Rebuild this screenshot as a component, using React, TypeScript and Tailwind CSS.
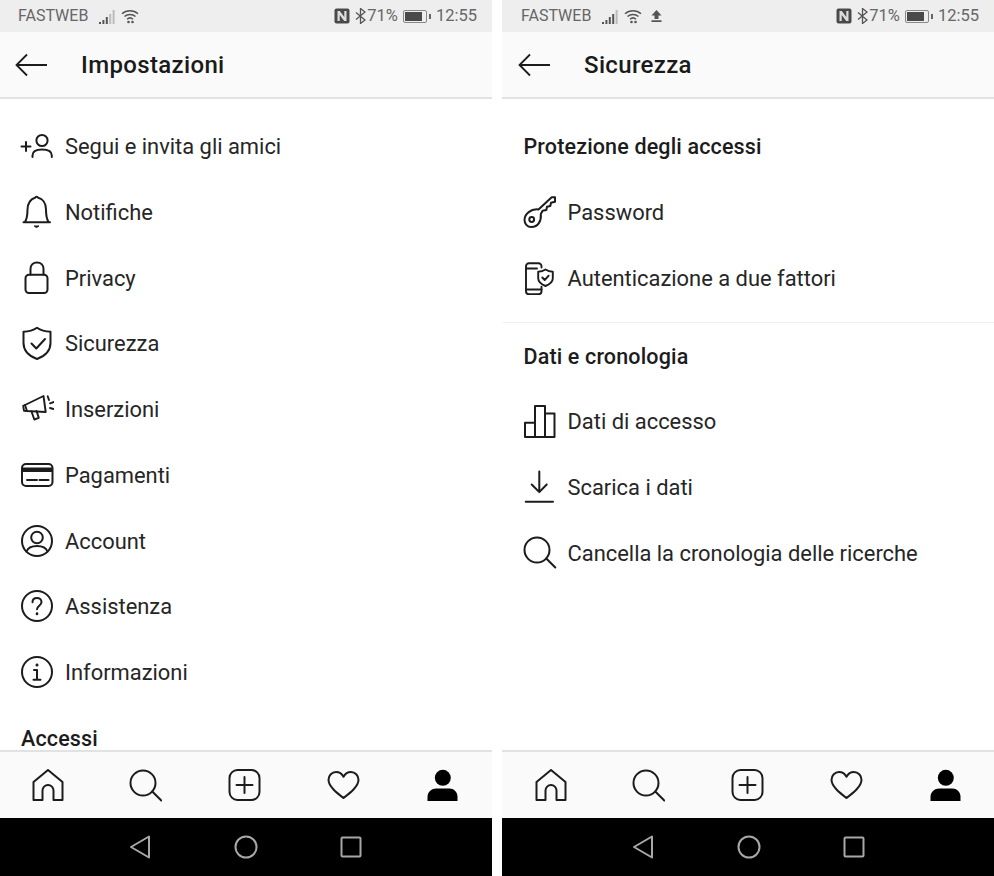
import React from "react";

const font = { fontFamily: "Roboto, sans-serif" };

type P = { children: React.ReactNode; w?: number; h?: number; sw?: number; cls?: string };
function Ic({ children, w = 34, h = 34, sw = 2, cls = "text-[#1c1c1c]" }: P) {
  return (
    <svg
      width={w}
      height={h}
      viewBox={`0 0 ${w} ${h}`}
      fill="none"
      stroke="currentColor"
      strokeWidth={sw}
      strokeLinecap="round"
      strokeLinejoin="round"
      className={`shrink-0 ${cls}`}
    >
      {children}
    </svg>
  );
}

const IconFollow = () => (
  <Ic>
    <path d="M1.500 17.500h9M6 13v9" />
    <circle cx="22" cy="11.500" r="5.600" />
    <path d="M12.500 28v-1.500C12.500 22.500 16 20.500 22 20.500s9.800 2 9.800 6V28" />
  </Ic>
);
const IconBell = () => (
  <Ic>
    <path d="M3.500 27.300H30M5 27c1.500-2.500 2.500-5.500 2.500-12.500C7.500 8 11 3.800 15 2.800c.6-1.300 2.600-1.300 3.200 0C22.500 3.800 26 8 26 14.500c0 7 1 10 2.500 12.500" />
    <path d="M14.500 31h4.500l-2.250 1.400z" fill="currentColor" strokeWidth="1" />
  </Ic>
);
const IconLock = () => (
  <Ic>
    <rect x="5.500" y="13.700" width="22" height="18.300" rx="3.500" />
    <path d="M10.500 13.500V8c0-3.800 2.800-6.500 6.500-6.500s6.500 2.700 6.500 6.500v5.500" />
  </Ic>
);
const IconShield = () => (
  <Ic>
    <path d="M17 1.800C20.500 4.300 25.500 5.700 30.500 5.800V17C30.500 25 25 30 17 33 9 30 3.500 25 3.500 17V5.800C8.500 5.700 13.500 4.300 17 1.800Z" />
    <path d="M11.500 17.500l4.800 5 8.700-9.500" />
  </Ic>
);
const IconMega = () => (
  <Ic sw={1.900}>
    <path d="M5 13l18.500-9 2.200 16L7 19z" />
    <path d="M5 13l-1.800.800.800 5 3 .200" />
    <path d="M11.500 19.500l2.800 8 4.500-1.600-2.300-7" />
    <path d="M27.700 4.300L29 8M30 11.300l4-1.300M30 16l3.500 1" />
  </Ic>
);
const IconCard = () => (
  <Ic>
    <rect x="2" y="6" width="30.500" height="22" rx="4" />
    <path d="M2.200 9.500h30V14h-30z" fill="currentColor" stroke="none" />
    <path d="M7 22h10M19.500 22h9" />
  </Ic>
);
const IconAccount = () => (
  <Ic>
    <circle cx="17" cy="17" r="15" />
    <circle cx="17" cy="13.500" r="5.800" />
    <path d="M6.500 27.500C8 23.500 12 22 17 22s9 1.500 10.500 5.500" />
  </Ic>
);
const IconHelp = () => (
  <Ic>
    <circle cx="17" cy="17" r="15" />
    <path d="M12.500 13.300c0-2.800 2-4.300 4.500-4.300s4.500 1.600 4.500 4c0 3.600-4.500 3.700-4.500 7.300" />
    <path d="M17 24.500v.4" strokeWidth="2.600" />
  </Ic>
);
const IconInfo = () => (
  <Ic>
    <circle cx="17" cy="17" r="15" />
    <path d="M17 9.800v.4" strokeWidth="2.800" />
    <path d="M14 15h3v9.500M13.500 24.700h7" />
  </Ic>
);
const IconKey = () => (
  <Ic>
    <path d="M15.500 14.500L28.700 2.300H32V6.700L28 7.700 27.300 11 24 11.700 23.300 15 19.600 15.700 17.800 19C18.500 26 15 32 8.500 32 4 32 1.500 28.500 1.500 25 1.500 19 8 13.500 15.500 14.500Z" />
    <circle cx="8.700" cy="24.500" r="2.400" />
  </Ic>
);
const IconPhone = () => (
  <Ic sw={1.900}>
    <path d="M18.500 6.500V5.300c0-1.800-1.300-3-3-3H6c-1.700 0-3 1.200-3 3v25c0 1.700 1.300 2.900 3 2.900h9.500c1.700 0 3-1.200 3-2.900v-4.500" />
    <path d="M3 7.500h11" />
    <path d="M3 28.500h15.500" />
    <path d="M22.500 8.500c2 1.300 4.500 2.100 7.300 2.200v6.500c0 3.700-3 6-7.300 7.800-4.300-1.800-7.300-4.100-7.300-7.800v-6.500c2.800-.1 5.300-.9 7.300-2.200z" />
    <path d="M19.300 16.500l2.400 2.500 4-4.300" />
  </Ic>
);
const IconChart = () => (
  <Ic>
    <rect x="2" y="18.700" width="10" height="14.300" />
    <rect x="12" y="2" width="10" height="31" />
    <rect x="22" y="9.500" width="9.500" height="23.500" />
  </Ic>
);
const IconDown = () => (
  <Ic>
    <path d="M16.300 1.500V22M8.700 14.500l7.600 7.600 7.400-7.600M2.700 31.700H30" />
  </Ic>
);
const IconSearch = ({ sm }: { sm?: boolean }) => (
  <Ic w={sm ? 33 : 34} h={sm ? 33 : 34}>
    <circle cx="14" cy="14" r="12.500" />
    <path d="M23.300 22.500l9 9" />
  </Ic>
);

const Home = () => (
  <Ic w={33} h={33}>
    <path d="M2.500 31V13L17 1l14.500 12v18H22.500v-9.500c0-3-2.500-5.500-5.500-5.500s-5.500 2.500-5.500 5.500V31z" />
  </Ic>
);
const Plus = () => (
  <Ic w={33} h={33}>
    <rect x="1.500" y="1" width="30" height="30" rx="8" />
    <path d="M16.500 8v16M8.500 16h16" />
  </Ic>
);
const Heart = () => (
  <Ic w={33} h={33}>
    <path d="M16.500 29C10 24 1.500 17.500 1.500 10.800 1.500 6.300 5 3 9 3c3.200 0 5.900 1.700 7.500 4.800C18.100 4.700 20.800 3 24 3c4 0 7.500 3.300 7.500 7.800 0 6.700-8.500 13.200-15 18.200z" />
  </Ic>
);
const Person = () => (
  <svg width="33" height="33" viewBox="0 0 33 33" className="shrink-0 text-black" fill="currentColor">
    <circle cx="16.800" cy="8.800" r="8" />
    <path d="M1.500 32v-4C1.500 22.500 6 19.500 10 19.500h13.500c4 0 8 3 8 8.500v4z" />
  </svg>
);

function Row({ icon, label }: { icon: React.ReactNode; label: string }) {
  return (
    <div className="flex h-[65.750px] items-center gap-[11px] pl-5">
      {icon}
      <span className="mt-0.5 whitespace-nowrap text-[21.900px] leading-none text-[#262626]">{label}</span>
    </div>
  );
}
function Heading({ label }: { label: string }) {
  return (
    <div className="flex h-[65.750px] items-center pl-[21px]">
      <span className="mt-0.5 whitespace-nowrap text-[21.500px] font-medium leading-none tracking-[0.15px] text-[#1c1c1c]">{label}</span>
    </div>
  );
}

function Signal({ full }: { full?: boolean }) {
  const heights = [2, 4, 7, 10, 14];
  return (
    <svg width="17" height="15" viewBox="0 0 17 15" className="shrink-0">
      {heights.map((h, i) => (
        <rect key={i} x={i * 3.400} y={15 - h} width="2" height={h} fill={i < (full ? 4 : 3) ? "#555555" : "#bbbbbb"} />
      ))}
    </svg>
  );
}
const Wifi = () => (
  <svg width="18" height="15" viewBox="0 0 18 15" fill="none" stroke="#555555" strokeWidth="1.500" className="shrink-0">
    <path d="M1 4.800C5.500.8 12.500.8 17 4.800M3.500 7.500c3-2.700 8-2.700 11 0M6 10.200c1.700-1.500 4.300-1.500 6 0" />
    <circle cx="7.500" cy="13" r="1.300" fill="#555555" stroke="none" />
    <circle cx="11.500" cy="13" r="1.300" fill="#555555" stroke="none" />
  </svg>
);
const Upload = () => (
  <svg width="11" height="12" viewBox="0 0 11 12" className="shrink-0" fill="#555555">
    <path d="M5.500 0L10.500 5.500H7.500V9H3.500V5.500H.5zM.5 10.300h10V12H.5z" />
  </svg>
);
const Nfc = () => (
  <svg width="16" height="16" viewBox="0 0 16 16" className="shrink-0">
    <rect x="0.500" y="0.500" width="15" height="15" rx="2" fill="#4a4a4a" />
    <path d="M3.500 3v10h2.200V7l4.500 6h2.300V3h-2.200v6L5.800 3z" fill="#dddddd" />
  </svg>
);
const Bt = () => (
  <svg width="11" height="16" viewBox="0 0 11 16" fill="none" stroke="#555555" strokeWidth="1.300" className="shrink-0">
    <path d="M1 4.500l9 7.500-4.500 3.500V.5L10 4l-9 7.500" />
  </svg>
);
const Battery = () => (
  <svg width="28" height="13" viewBox="0 0 28 13" className="shrink-0">
    <rect x="0.500" y="0.500" width="23" height="12" rx="1.500" fill="none" stroke="#888888" />
    <rect x="2" y="2" width="17" height="9" fill="#4a4a4a" />
    <rect x="26" y="4" width="2" height="5" fill="#666666" />
  </svg>
);

function Status({ right }: { right?: boolean }) {
  return (
    <div className={`flex h-8 shrink-0 items-center justify-between bg-[#eeeeee] pr-[15px] text-[#666666] ${right ? "pl-[19px]" : "pl-[18px]"}`}>
      <div className="flex items-center">
        <span className="text-[16px] leading-none">FASTWEB</span>
        <div className="ml-[11px] flex items-center gap-[5px]">
          <Signal full={right} />
          <Wifi />
          {right && <div className="ml-[4px]"><Upload /></div>}
        </div>
      </div>
      <div className="flex items-center">
        <Nfc />
        <div className="ml-[5px] mr-[1.500px]"><Bt /></div>
        <span className="text-[16.500px] leading-none">71%</span>
        <div className="ml-[5px]"><Battery /></div>
        <span className="ml-[5px] text-[16.500px] leading-none">12:55</span>
      </div>
    </div>
  );
}

function Header({ title, right }: { title: string; right?: boolean }) {
  return (
    <div className={`flex h-[65px] shrink-0 items-center bg-[#fafafa] ${right ? "pl-[16px]" : "pl-[15px]"}`}>
      <svg width="33" height="24" viewBox="0 0 33 24" fill="none" stroke="#1c1c1c" strokeWidth="1.800" className="shrink-0">
        <path d="M32 12H1.500M12 1.500L1.500 12 12 22.500" />
      </svg>
      <span className="ml-[33px] mt-px text-[24px] font-medium leading-none tracking-[0.35px] text-[#1a1a1a]">{title}</span>
    </div>
  );
}

function BottomNav({ right }: { right?: boolean }) {
  return (
    <div className={`flex h-[68px] shrink-0 items-center gap-[65.750px] border-t-2 border-[#e2e2e2] bg-[#fafafa] ${right ? "pl-[31.500px]" : "pl-[30.500px]"}`}>
      <Home />
      <IconSearch sm />
      <Plus />
      <Heart />
      <Person />
    </div>
  );
}

function AndroidBar({ right }: { right?: boolean }) {
  return (
    <div className={`flex h-[58px] shrink-0 items-center gap-[81.500px] bg-black ${right ? "pl-[129px]" : "pl-[128px]"}`}>
      <svg width="24" height="24" viewBox="0 0 24 24" fill="none" stroke="#a8a8a8" strokeWidth="2" strokeLinejoin="round" className="shrink-0">
        <path d="M21 1.500V22.500L3 12z" />
      </svg>
      <svg width="24" height="24" viewBox="0 0 24 24" fill="none" stroke="#a8a8a8" strokeWidth="2" className="shrink-0">
        <circle cx="12" cy="12" r="10.500" />
      </svg>
      <svg width="24" height="24" viewBox="0 0 24 24" fill="none" stroke="#a8a8a8" strokeWidth="2" className="shrink-0">
        <rect x="2.500" y="2.500" width="19" height="19" rx="1" />
      </svg>
    </div>
  );
}

function Phone({ title, right, children }: { title: string; right?: boolean; children: React.ReactNode }) {
  return (
    <div className="flex h-[876px] w-[492px] shrink-0 flex-col overflow-hidden bg-white">
      <Status right={right} />
      <Header title={title} right={right} />
      <div className="h-0.5 shrink-0 bg-[#e2e2e2]" />
      <div className={`min-h-0 flex-1 overflow-hidden pt-[14.300px] ${right ? "pl-[0.500px]" : ""}`}>{children}</div>
      <BottomNav right={right} />
      <AndroidBar right={right} />
    </div>
  );
}

export default function App() {
  return (
    <div className="flex h-[876px] w-[994px] gap-2.5 overflow-hidden bg-white" style={font}>
      <Phone title="Impostazioni">
        <Row icon={<IconFollow />} label="Segui e invita gli amici" />
        <Row icon={<IconBell />} label="Notifiche" />
        <Row icon={<IconLock />} label="Privacy" />
        <Row icon={<IconShield />} label="Sicurezza" />
        <Row icon={<IconMega />} label="Inserzioni" />
        <Row icon={<IconCard />} label="Pagamenti" />
        <Row icon={<IconAccount />} label="Account" />
        <Row icon={<IconHelp />} label="Assistenza" />
        <Row icon={<IconInfo />} label="Informazioni" />
        <Heading label="Accessi" />
      </Phone>
      <Phone title="Sicurezza" right>
        <Heading label="Protezione degli accessi" />
        <Row icon={<IconKey />} label="Password" />
        <Row icon={<IconPhone />} label="Autenticazione a due fattori" />
        <div className="mt-[11px] h-px bg-[#eeeeee]" />
        <Heading label="Dati e cronologia" />
        <Row icon={<IconChart />} label="Dati di accesso" />
        <Row icon={<IconDown />} label="Scarica i dati" />
        <Row icon={<IconSearch />} label="Cancella la cronologia delle ricerche" />
      </Phone>
    </div>
  );
}
